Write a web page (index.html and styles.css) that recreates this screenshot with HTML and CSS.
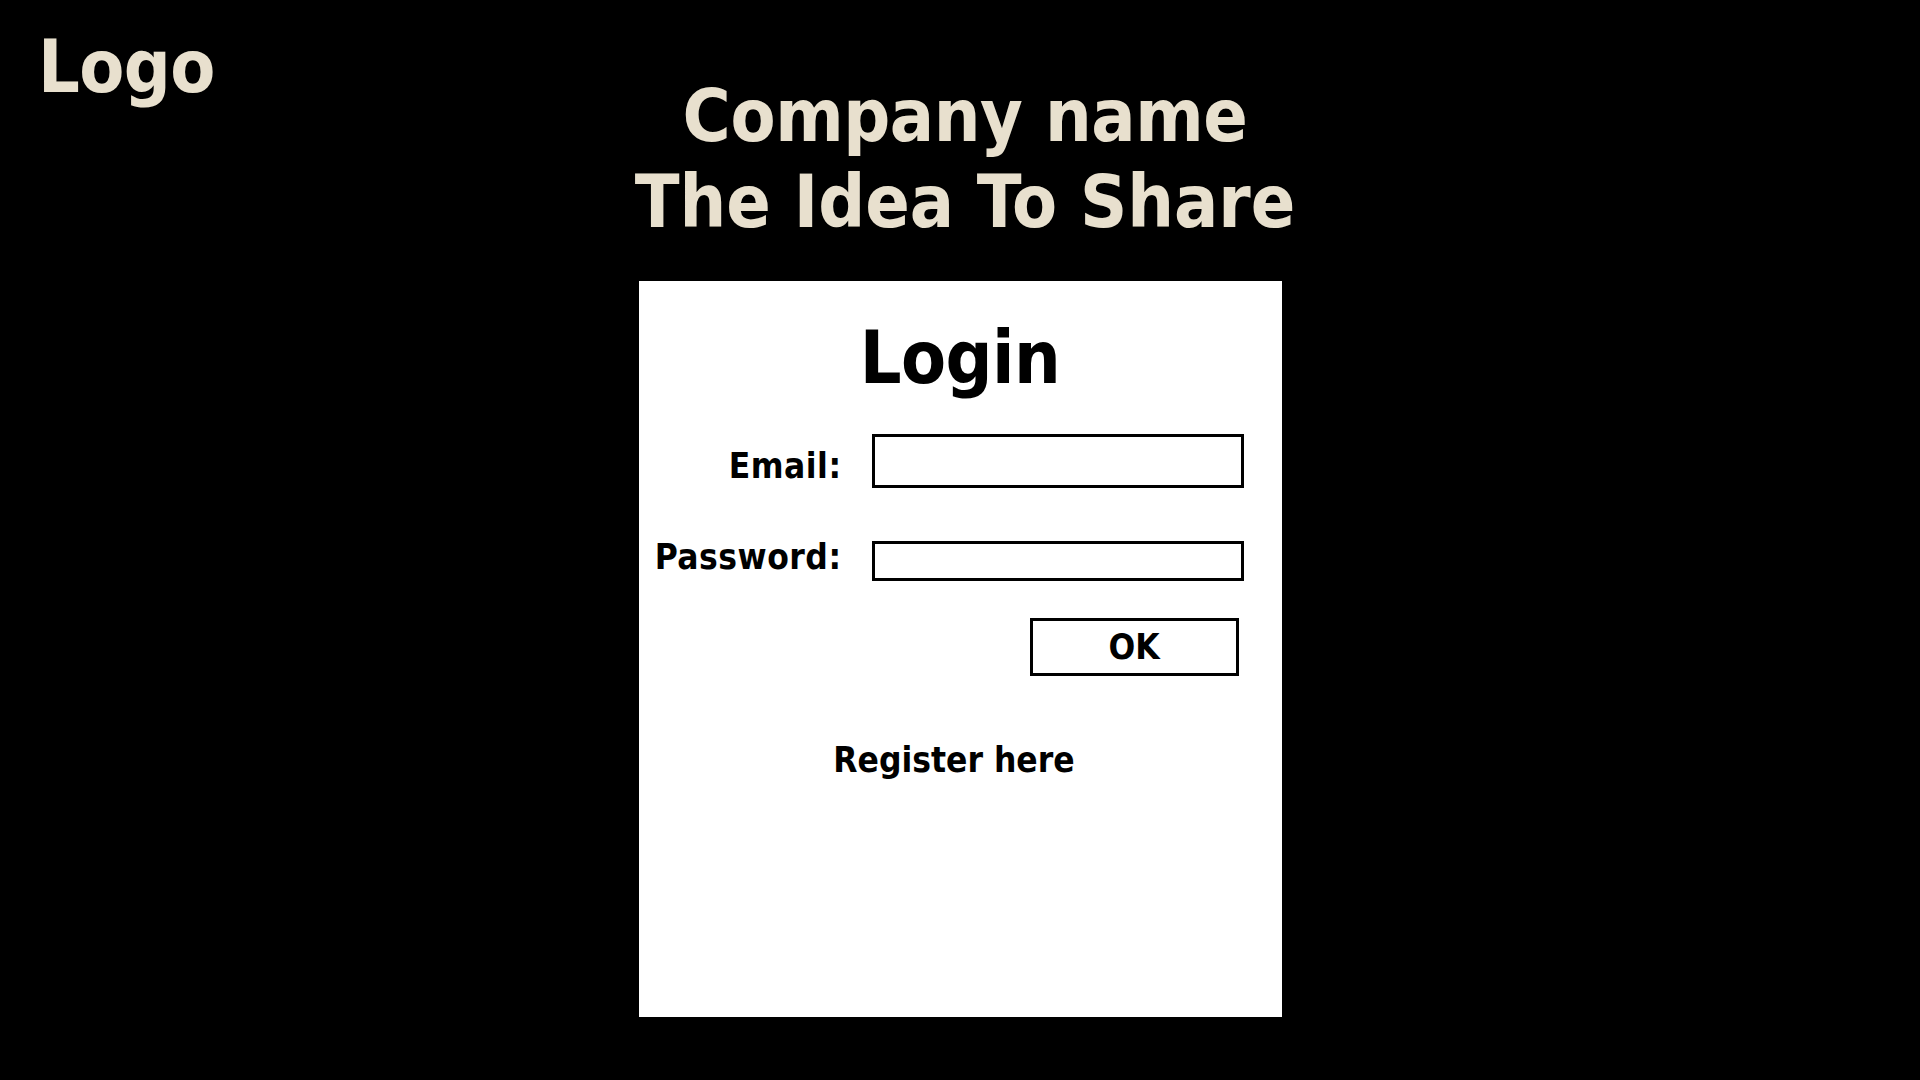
FILE: index.html
```html
<!DOCTYPE html>
<html lang="en">
<head>
<meta charset="utf-8">
<title>Login</title>
<link rel="stylesheet" href="styles.css">
</head>
<body>
<header class="top">
  <div class="logo">Logo</div>
  <div class="brand">
    <div class="brand-line">Company name</div>
    <div class="brand-line">The Idea To Share</div>
  </div>
</header>
<main class="card">
  <h1 class="card-title">Login</h1>
  <form class="form">
    <label class="field-label field-label-email" for="email">Email:</label>
    <input class="field-input" id="email" type="text">
    <label class="field-label field-label-password" for="password">Password:</label>
    <input class="field-input" id="password" type="password">
  </form>
  <div class="actions">
    <button class="ok-button" type="button">OK</button>
  </div>
  <div class="register">Register here</div>
</main>
</body>
</html>
```

FILE: styles.css
```css
html, body {
  margin: 0;
  padding: 0;
  background: #000;
}

body {
  width: 1920px;
  height: 1080px;
  overflow: hidden;
  font-family: "DejaVu Sans Condensed", "DejaVu Sans", sans-serif;
  font-weight: bold;
}

.top {
  display: grid;
  grid-template-columns: 1fr auto 1fr;
  align-items: start;
  color: #e8e0ce;
}

.logo {
  font-size: 73px;
  line-height: 86px;
  margin-top: 24px;
  padding-left: 38px;
  letter-spacing: -0.6px;
}

.brand {
  margin-top: 73px;
  padding-left: 10px;
  text-align: center;
  font-size: 73px;
  line-height: 86px;
}

.brand-line:first-child {
  letter-spacing: -0.4px;
}

.card {
  width: 643px;
  height: 736px;
  margin: 36px auto 0;
  background: #fff;
  padding-top: 34px;
  box-sizing: border-box;
  color: #000;
}

.card-title {
  margin: 0;
  font-size: 73px;
  line-height: 86px;
  text-align: center;
  font-weight: bold;
  letter-spacing: -0.5px;
}

.form {
  display: grid;
  grid-template-columns: 203px 372px;
  grid-template-rows: 54px 40px;
  column-gap: 30px;
  row-gap: 53px;
  align-items: center;
  margin: 33px 0 0;
}

.field-label {
  font-size: 35px;
  line-height: 40px;
  text-align: right;
  letter-spacing: 0.5px;
}

.field-label-email {
  padding-top: 10px;
}

.field-label-password {
  padding-bottom: 9px;
}

.field-input {
  width: 372px;
  height: 100%;
  box-sizing: border-box;
  border: 3px solid #000;
  background: #fff;
  padding: 0;
  margin: 0;
  outline: none;
}

.actions {
  display: flex;
  justify-content: flex-end;
  padding-right: 43px;
  margin-top: 37px;
}

.ok-button {
  width: 209px;
  height: 58px;
  box-sizing: border-box;
  border: 3px solid #000;
  background: #fff;
  color: #000;
  padding: 0;
  font-family: inherit;
  font-weight: bold;
  font-size: 35px;
  line-height: 40px;
}

.register {
  margin-top: 64px;
  padding-right: 12px;
  text-align: center;
  font-size: 35px;
  line-height: 40px;
}
```
